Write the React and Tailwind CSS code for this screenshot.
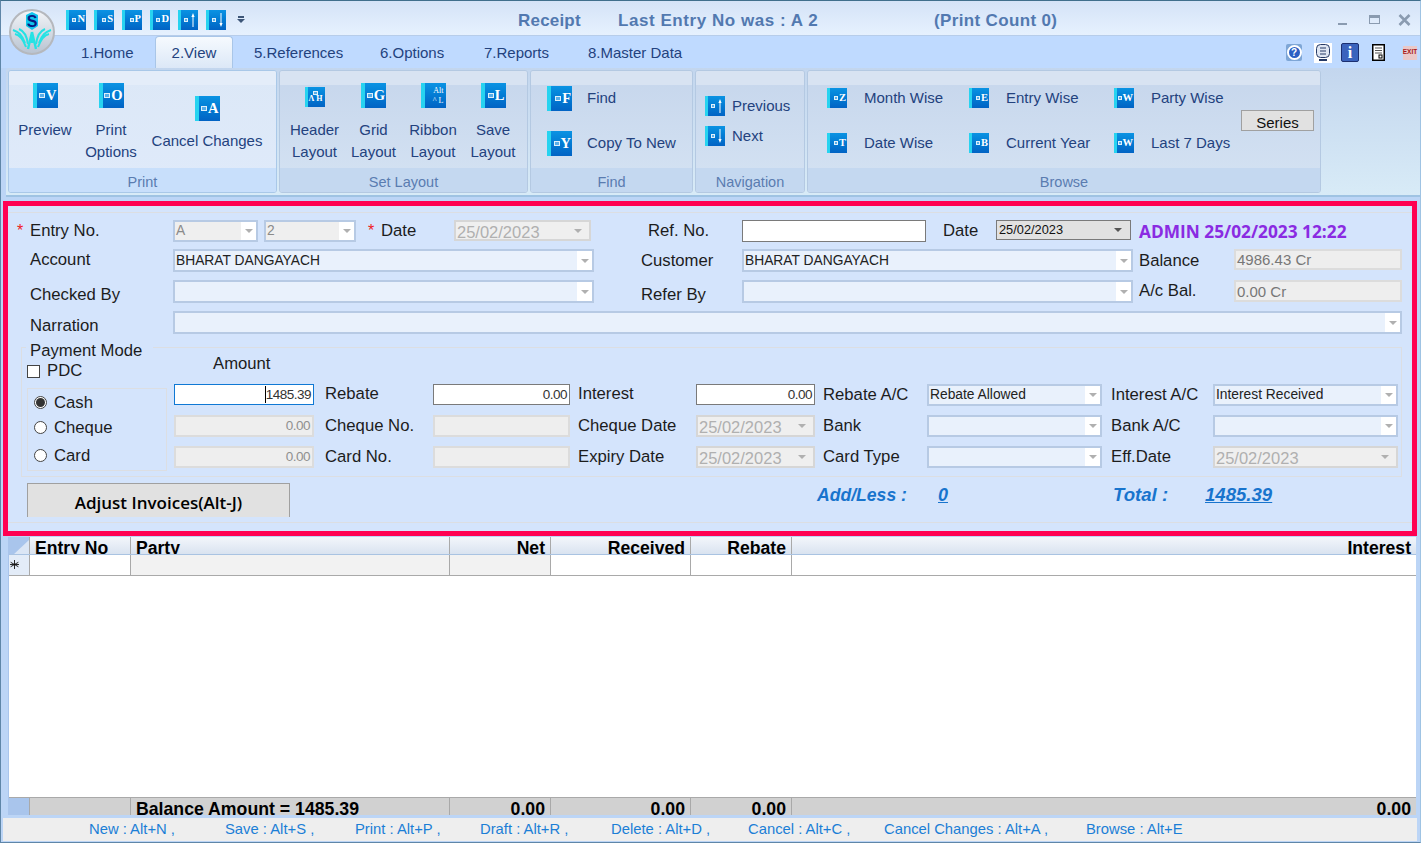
import React from 'react'

// blue "book" shortcut icon used all over the ribbon
function BookIcon({ k, size = 25, arrow, custom, noSquare }) {
  const small = size < 22
  return (
    <div
      className={`flex shrink-0 items-center justify-end overflow-hidden bg-gradient-to-b from-[#0b93e3] to-[#0263c4] ${small ? 'h-[20px] w-[20px] border-l-[3px]' : 'h-[25px] w-[25px] border-l-[4px]'} border-l-[#27d3f0]`}
    >
      {!noSquare && <span className={`block shrink-0 border border-white/80 bg-[#58aee8] ${small ? 'mr-px h-[4px] w-[4px]' : 'mr-px h-[5px] w-[6px]'}`} />}
      {custom}
      {arrow && (
        <svg width="8" height="16" viewBox="0 0 8 16" className="mr-[1px]">
          {arrow === 'up' ? (
            <path d="M4 1 L5.6 5 H4.5 V15 H3.5 V5 H2.4 Z" fill="#fff" />
          ) : (
            <path d="M4 15 L5.6 11 H4.5 V1 H3.5 V11 H2.4 Z" fill="#fff" />
          )}
        </svg>
      )}
      {k && (
        <span className={`pr-px font-['Liberation_Serif',serif] font-bold leading-none text-white ${small ? 'text-[10.5px]' : 'text-[14.5px]'}`}>{k}</span>
      )}
    </div>
  )
}

function RibbonGroup({ title, width, active, children }) {
  return (
    <div
      className={`flex h-[123px] shrink-0 flex-col overflow-hidden rounded-[3px] border ${width} ${active ? 'border-[#a9c8e8] bg-gradient-to-b from-[#dce8f7] to-[#dfeafa]' : 'border-[#b4c9e2] bg-gradient-to-b from-[#c6d6ec] to-[#d5e3f3]'}`}
    >
      <div className={`h-[14px] shrink-0 ${active ? 'bg-[#e4edf9]' : 'bg-[#d8e3f2]'}`} />
      <div className="relative -mt-[2px] flex min-h-0 flex-1">{children}</div>
      <div className={`flex h-[24px] shrink-0 items-center justify-center pt-[5px] text-[14.5px] text-[#5a7cb0] ${active ? 'bg-[#c8dffb]' : 'bg-[#c4d8f0]'}`}>{title}</div>
    </div>
  )
}

function BigButton({ icon, custom, noSquare, small, lines, width, top, gap = 'mt-[11px]' }) {
  return (
    <div className={`flex shrink-0 flex-col items-center ${width} ${top}`}>
      <BookIcon k={icon} custom={custom} noSquare={noSquare} size={small ? 20 : 25} />
      <div className={`flex flex-col items-center whitespace-nowrap text-[15px] leading-[22px] text-[#23427e] ${gap}`}>
        {lines.map((l) => (
          <span key={l}>{l}</span>
        ))}
      </div>
    </div>
  )
}

function SmallButton({ icon, label, gap, arrow, size = 20 }) {
  return (
    <div className="flex items-center whitespace-nowrap text-[15px] leading-[22px] text-[#23427e]">
      <BookIcon k={icon} size={size} arrow={arrow} />
      <span className={gap}>{label}</span>
    </div>
  )
}

function Caret({ color = 'border-t-[#9a9a9a]' }) {
  return <span className={`block h-0 w-0 border-x-[4px] border-t-[4px] border-x-transparent ${color}`} />
}

function Combo({ value, width, height = 'h-[23px]', disabled }) {
  return (
    <div
      className={`flex shrink-0 items-center border-2 border-[#b7cae4] ${width} ${height} ${disabled ? 'bg-[#efefef] text-[#8a8a8a]' : 'bg-[#e9f1fc] text-[#222]'}`}
    >
      <span className="min-w-0 flex-1 truncate pl-[1px] text-[13.8px] leading-none">{value}</span>
      <span className="flex h-full w-[15px] shrink-0 items-center justify-center bg-white">
        <Caret color="border-t-[#b0b0b0]" />
      </span>
    </div>
  )
}

function DateBox({ value, width, height = 'h-[21px]' }) {
  return (
    <div className={`flex shrink-0 items-center border-2 border-[#d6d6d6] bg-[#efefef] pr-[7px] ${width} ${height}`}>
      <span className="min-w-0 flex-1 truncate pl-[1px] pt-[3px] text-[16.5px] leading-none text-[#b0b0b0]">{value}</span>
      <Caret color="border-t-[#b0b0b0]" />
    </div>
  )
}

function Amount({ value, width, height = 'h-[22px]', kind }) {
  const look =
    kind === 'focus'
      ? 'border-[#0f78d4] bg-white text-[#333]'
      : kind === 'white'
        ? 'border-[#7a7a7a] bg-white text-[#333]'
        : 'border-[#dcdcdc] border-2 bg-[#eeeeee] text-[#909090]'
  return (
    <div className={`flex shrink-0 items-center justify-end border pr-[2px] text-[13.5px] leading-none tracking-[-0.5px] ${look} ${width} ${height}`}>
      {kind === 'focus' && <span className="h-[17px] w-px bg-black" />}
      {value}
    </div>
  )
}

function ReadOnly({ value, height }) {
  return (
    <div className={`flex w-[168px] shrink-0 items-center border-2 border-[#dcdcdc] bg-[#eeeeee] pl-[1px] text-[15px] leading-none text-[#777] ${height}`}>{value}</div>
  )
}

function Label({ text, width, className = '' }) {
  return <div className={`flex h-full shrink-0 items-center whitespace-nowrap text-[16.7px] text-[#1c1c1c] ${width} ${className}`}>{text}</div>
}

function Radio({ checked, label, height }) {
  return (
    <div className={`flex items-center ${height}`}>
      <span className="flex h-[13px] w-[13px] items-center justify-center rounded-full border border-[#444] bg-white">
        {checked && <span className="h-[9px] w-[9px] rounded-full bg-[#333]" />}
      </span>
      <span className="ml-[7px] text-[16.7px] text-[#1c1c1c]">{label}</span>
    </div>
  )
}

function Star() {
  return <span className="text-[16px] leading-none text-[#f02020]">*</span>
}

function GridRow({ height, cells, className = '', textClass = '' }) {
  const widths = ['w-[21px]', 'w-[101px]', 'w-[319px]', 'w-[101px]', 'w-[140px]', 'w-[101px]', 'flex-1']
  return (
    <div className={`flex shrink-0 overflow-hidden ${height} ${className}`}>
      {cells.map((c, i) => (
        <div
          key={i}
          className={`shrink-0 overflow-hidden whitespace-nowrap border-r border-[#a9a9a9] px-[5px] last:border-r-0 ${widths[i]} ${c.bg || ''} ${c.right ? 'text-right' : 'text-left'} ${textClass}`}
        >
          {c.text}
        </div>
      ))}
    </div>
  )
}

export default function App() {
  const quick = [{ k: 'N' }, { k: 'S' }, { k: 'P' }, { k: 'D' }, { arrow: 'up' }, { arrow: 'down' }]
  const hints = [
    ['New : Alt+N ,', 'w-[136px]'],
    ['Save : Alt+S ,', 'w-[130px]'],
    ['Print : Alt+P ,', 'w-[125px]'],
    ['Draft : Alt+R ,', 'w-[131px]'],
    ['Delete : Alt+D ,', 'w-[137px]'],
    ['Cancel : Alt+C ,', 'w-[136px]'],
    ['Cancel Changes : Alt+A ,', 'w-[202px]'],
    ['Browse : Alt+E', 'w-[110px]'],
  ]

  return (
    <div className="relative flex h-[843px] w-[1421px] flex-col overflow-hidden border-b border-l border-r border-t border-b-[#5f86a8] border-l-[#5f86a8] border-r-[#9fc3e3] border-t-[#3f6f8c] bg-[#bcd5f6] font-['Liberation_Sans',sans-serif]">
      {/* title bar */}
      <div className="flex h-[35px] shrink-0 items-center border-b border-[#b7cdea] bg-gradient-to-b from-[#d4e3f7] to-[#e6f1fe] pl-[65px] pt-[3px]">
        <div className="flex w-[169px] gap-[8px]">
          {quick.map((q, i) => (
            <BookIcon key={i} k={q.k} arrow={q.arrow} size={20} />
          ))}
        </div>
        <div className="flex w-[12px] flex-col items-center gap-[1px]">
          <span className="h-[2px] w-[6px] bg-[#3d5678]" />
          <Caret color="border-t-[#3d5678]" />
        </div>
        <div className="ml-[271px] w-[100px] pt-[2px] text-[17px] font-bold tracking-[0.2px] text-[#5279b0]">Receipt</div>
        <div className="w-[316px] pt-[2px] text-[17px] font-bold tracking-[0.55px] text-[#5279b0]">Last Entry No was : A 2</div>
        <div className="pt-[2px] text-[17px] font-bold tracking-[0.35px] text-[#5279b0]">(Print Count 0)</div>
        <div className="ml-auto flex items-center pr-[9px]">
          <span className="mt-[8px] h-[2px] w-[9px] bg-[#8a9bb0]" />
          <span className="ml-[22px] h-[9px] w-[11px] border border-t-[3px] border-[#8a9bb0]" />
          <svg width="13" height="12" viewBox="0 0 13 12" className="ml-[18px]">
            <path d="M1.5 1 L11.5 11 M11.5 1 L1.5 11" stroke="#8a9bb0" strokeWidth="2.6" />
          </svg>
        </div>
      </div>

      {/* logo sits over title bar and tabs */}
      <div className="absolute left-[8px] top-[8px] flex h-[46px] w-[46px] items-center justify-center overflow-hidden rounded-full border-2 border-[#b5b8bd] bg-gradient-to-b from-[#f2f4f7] to-[#b9c4d2]">
        <svg width="42" height="42" viewBox="0 0 42 42">
          <path d="M21 1 L27 4 V15 L21 19 L15 15 V4 Z" fill="#10c4ee" />
          <text x="21" y="15.5" textAnchor="middle" fontFamily="Liberation Sans" fontWeight="bold" fontSize="16" fill="#0a1a80">S</text>
          <path d="M2 19 C8 21 11 24 14 32 M4 23 C9 24 12 28 15 36 M8 18 C13 20 16 26 17 33 M40 19 C34 21 31 24 28 32 M38 23 C33 24 30 28 27 36 M34 18 C29 20 26 26 25 33" fill="none" stroke="#25e2e4" strokeWidth="2" />
          <path d="M21 21 L17 38 M21 21 L25 38 M21 21 V32" stroke="#25e2e4" strokeWidth="2.4" />
        </svg>
      </div>

      {/* tabs */}
      <div className="flex h-[32px] shrink-0 items-stretch bg-[#bfdaff] text-[15px] text-[#23427e]">
        <div className="flex w-[154px] items-center pl-[80px] pt-[3px]">1.Home</div>
        <div className="flex w-[78px] items-center justify-center rounded-t-[4px] border border-b-0 border-[#a9c6e8] bg-gradient-to-b from-[#f6fafe] to-[#dce8f7] pt-[2px]">2.View</div>
        <div className="flex w-[147px] items-center pl-[21px] pt-[3px]">5.References</div>
        <div className="flex w-[104px] items-center pt-[3px]">6.Options</div>
        <div className="flex w-[104px] items-center pt-[3px]">7.Reports</div>
        <div className="flex w-[698px] items-center pt-[3px]">8.Master Data</div>
        <div className="flex items-center pt-[1px]">
          <span className="flex h-[17px] w-[16px] items-center justify-center rounded-[2px] bg-[#7ea6d6]">
            <span className="flex h-[15px] w-[15px] items-center justify-center rounded-full border-2 border-white bg-[#2b5fc4] text-[10px] font-bold leading-none text-white">?</span>
          </span>
          <svg width="18" height="20" viewBox="0 0 18 20" className="ml-[12px] bg-white">
            <rect x="2.5" y="1.5" width="13" height="13" rx="4" fill="#dfe6f2" stroke="#263a66" />
            <path d="M6 5 H12 M6 8 H12 M6 11 H12" stroke="#263a66" />
            <path d="M5 17 H13" stroke="#263a66" strokeWidth="2" />
          </svg>
          <span className="ml-[9px] flex h-[19px] w-[18px] items-center justify-center rounded-[2px] border border-[#1c2f70] bg-[#3a63bd] font-['Liberation_Serif',serif] text-[16px] font-bold leading-none text-white">i</span>
          <svg width="15" height="17" viewBox="0 0 15 17" className="ml-[12px]">
            <rect x="1.75" y="0.75" width="11.5" height="15.5" fill="#fff" stroke="#000" strokeWidth="1.5" />
            <path d="M4 4 H11 M4 6.5 H11 M4 9 H11" stroke="#555" />
            <rect x="8" y="11" width="3" height="3" fill="none" stroke="#000" />
          </svg>
          <span className="ml-[17px] flex h-[14px] w-[14px] items-center justify-center bg-[#e9c9c9] text-[6.5px] font-bold leading-none text-[#a81818]">EXIT</span>
        </div>
      </div>

      {/* ribbon */}
      <div className="ml-[5px] flex h-[129px] shrink-0 gap-[2px] rounded-tl-[3px] border-b-2 border-[#9fc3e3] bg-gradient-to-b from-[#c3d6ee] to-[#d8ebf7] pl-[2px] pt-[2px]">
        <RibbonGroup title="Print" width="w-[269px]" active>
          <BigButton icon="V" lines={['Preview']} width="w-[72px]" top="pt-[0px]" />
          <BigButton icon="O" lines={['Print', 'Options']} width="w-[60px]" top="pt-[0px]" />
          <BigButton icon="A" lines={['Cancel Changes']} width="w-[132px]" top="pt-[13px]" gap="mt-[9px]" />
        </RibbonGroup>
        <RibbonGroup title="Set Layout" width="w-[249px]">
          <div className="flex pl-[5px]">
            <BigButton
              small
              noSquare
              custom={
                <span className="flex flex-col items-center pr-[2px] font-['Liberation_Serif',serif] text-[8px] font-bold leading-[8px] text-white">
                  <span className="h-[4px] w-[5px] border border-white/80 bg-[#58aee8]" />
                  <span>Λ H</span>
                </span>
              }
              lines={['Header', 'Layout']}
              width="w-[59px]"
              top="pt-[4px]"
              gap="mt-[12px]"
            />
            <BigButton icon="G" lines={['Grid', 'Layout']} width="w-[59px]" />
            <BigButton
              noSquare
              custom={
                <span className="flex flex-col items-end pr-[2px] font-['Liberation_Serif',serif] text-[8px] leading-[10px] text-white">
                  <span>Alt</span>
                  <span>^ L</span>
                </span>
              }
              lines={['Ribbon', 'Layout']}
              width="w-[60px]"
            />
            <BigButton icon="L" lines={['Save', 'Layout']} width="w-[60px]" />
          </div>
        </RibbonGroup>
        <RibbonGroup title="Find" width="w-[163px]">
          <div className="flex flex-col gap-[20px] pl-[16px] pt-[3px]">
            <SmallButton icon="F" label="Find" gap="ml-[15px] pb-[2px]" size={25} />
            <SmallButton icon="Y" label="Copy To New" gap="ml-[15px] pb-[2px]" size={25} />
          </div>
        </RibbonGroup>
        <RibbonGroup title="Navigation" width="w-[110px]">
          <div className="flex flex-col gap-[8px] pl-[9px] pt-[12px]">
            <SmallButton arrow="up" label="Previous" gap="ml-[7px]" />
            <SmallButton arrow="down" label="Next" gap="ml-[7px]" />
          </div>
        </RibbonGroup>
        <RibbonGroup title="Browse" width="w-[514px]">
          <div className="grid grid-cols-[142px_145px_130px] gap-y-[23px] self-start pl-[19px] pt-[4px]">
            <SmallButton icon="Z" label="Month Wise" gap="ml-[17px]" />
            <SmallButton icon="E" label="Entry Wise" gap="ml-[17px]" />
            <SmallButton icon="W" label="Party Wise" gap="ml-[17px]" />
            <SmallButton icon="T" label="Date Wise" gap="ml-[17px]" />
            <SmallButton icon="B" label="Current Year" gap="ml-[17px]" />
            <SmallButton icon="W" label="Last 7 Days" gap="ml-[17px]" />
          </div>
          <div className="ml-[-3px] mt-[27px] flex h-[21px] w-[73px] items-center justify-center self-start border border-[#a0a0a0] bg-[#e1e1e1] pt-[3px] text-[15px] leading-none text-[#111]">Series</div>
        </RibbonGroup>
      </div>

      {/* form */}
      <div className="ml-[2px] mt-[4px] flex h-[335px] w-[1414px] shrink-0 flex-col border-[5px] border-[#ff0052] bg-[#d4e4fc]">
        <div className="mt-[6px] h-px shrink-0 bg-[#dcdee2]" />
        <div className="ml-[9px] mt-[7px] flex h-[22px] shrink-0">
          <div className="flex w-[13px] items-center"><Star /></div>
          <Label text="Entry No." width="w-[143px]" />
          <Combo value="A" width="w-[85px]" height="h-[22px]" disabled />
          <div className="w-[6px]" />
          <Combo value="2" width="w-[92px]" height="h-[22px]" disabled />
          <div className="ml-[12px] flex w-[13px] items-center"><Star /></div>
          <Label text="Date" width="w-[73px]" />
          <DateBox value="25/02/2023" width="w-[137px]" />
          <Label text="Ref. No." width="w-[94px]" className="ml-[57px]" />
          <div className="h-[22px] w-[184px] shrink-0 border border-[#7a7a7a] bg-white" />
          <Label text="Date" width="w-[53px]" className="ml-[17px]" />
          <div className="flex h-[20px] w-[135px] shrink-0 items-center border border-[#7a7a7a] bg-[#e1e1e1] pr-[8px]">
            <span className="flex-1 pl-[2px] text-[12.8px] leading-none text-[#111]">25/02/2023</span>
            <Caret color="border-t-[#555]" />
          </div>
          <div className="ml-[8px] flex h-full items-center whitespace-nowrap pt-[2px] font-['Open_Sans',sans-serif] text-[17.3px] font-bold text-[#8a2be2]">ADMIN 25/02/2023 12:22</div>
        </div>

        <div className="ml-[22px] mt-[7px] flex h-[23px] shrink-0">
          <Label text="Account" width="w-[143px]" className="pb-[2px]" />
          <Combo value="BHARAT DANGAYACH" width="w-[421px]" />
          <Label text="Customer" width="w-[101px]" className="ml-[47px]" />
          <Combo value="BHARAT DANGAYACH" width="w-[391px]" />
          <Label text="Balance" width="w-[95px]" className="ml-[6px]" />
          <ReadOnly value="4986.43 Cr" height="h-[21px]" />
        </div>

        <div className="ml-[22px] mt-[8px] flex h-[23px] shrink-0">
          <Label text="Checked By" width="w-[143px]" className="pt-[6px]" />
          <Combo width="w-[421px]" />
          <Label text="Refer By" width="w-[101px]" className="ml-[47px] pt-[6px]" />
          <Combo width="w-[391px]" />
          <Label text="A/c Bal." width="w-[95px]" className="ml-[6px] pb-[2px]" />
          <ReadOnly value="0.00 Cr" height="h-[22px]" />
        </div>

        <div className="ml-[22px] mt-[8px] flex h-[23px] shrink-0">
          <Label text="Narration" width="w-[143px]" className="pt-[6px]" />
          <Combo width="w-[1229px]" />
        </div>

        {/* payment group */}
        <div className="ml-[13px] mt-[13px] flex h-[130px] w-[1381px] shrink-0 border border-[#dcdee2] pl-[5px]">
          <div className="flex w-[140px] shrink-0 flex-col">
            <div className="-ml-[1px] -mt-[8px] flex h-[22px] w-[127px] items-center bg-[#d4e4fc] pl-[4px] text-[16.7px] text-[#1c1c1c]">Payment Mode</div>
            <div className="flex h-[18px] items-center">
              <span className="h-[13px] w-[13px] border border-[#444] bg-white" />
              <span className="ml-[7px] text-[16.7px] text-[#1c1c1c]">PDC</span>
            </div>
            <div className="mt-[8px] flex h-[83px] flex-col border border-[#dcdee2] pl-[6px] pt-[1px]">
              <Radio checked label="Cash" height="h-[26px]" />
              <Radio label="Cheque" height="h-[24px]" />
              <Radio label="Card" height="h-[31px] pt-[2px]" />
            </div>
          </div>
          <div className="ml-[7px] flex flex-col">
            <div className="flex h-[32px] items-center pl-[39px] text-[16.7px] text-[#1c1c1c]">Amount</div>
            <div className="mt-[4px] flex h-[21px]">
              <Amount value="1485.39" width="w-[140px]" height="h-[21px]" kind="focus" />
              <Label text="Rebate" width="w-[108px]" className="ml-[11px] pb-[2px]" />
              <Amount value="0.00" width="w-[137px]" height="h-[21px]" kind="white" />
              <Label text="Interest" width="w-[118px]" className="ml-[8px] pb-[2px]" />
              <Amount value="0.00" width="w-[119px]" height="h-[21px]" kind="white" />
              <Label text="Rebate A/C" width="w-[104px]" className="ml-[8px]" />
              <Combo value="Rebate Allowed" width="w-[175px]" height="h-[22px]" />
              <Label text="Interest A/C" width="w-[102px]" className="ml-[9px]" />
              <Combo value="Interest Received" width="w-[185px]" height="h-[22px]" />
            </div>
            <div className="mt-[10px] flex h-[22px]">
              <Amount value="0.00" width="w-[140px]" />
              <Label text="Cheque No." width="w-[108px]" className="ml-[11px]" />
              <Amount width="w-[137px]" />
              <Label text="Cheque Date" width="w-[118px]" className="ml-[8px]" />
              <DateBox value="25/02/2023" width="w-[119px]" height="h-[22px]" />
              <Label text="Bank" width="w-[104px]" className="ml-[8px]" />
              <Combo width="w-[175px]" height="h-[22px]" />
              <Label text="Bank A/C" width="w-[102px]" className="ml-[9px]" />
              <Combo width="w-[185px]" height="h-[22px]" />
            </div>
            <div className="mt-[9px] flex h-[22px]">
              <Amount value="0.00" width="w-[140px]" />
              <Label text="Card No." width="w-[108px]" className="ml-[11px]" />
              <Amount width="w-[137px]" />
              <Label text="Expiry Date" width="w-[118px]" className="ml-[8px]" />
              <DateBox value="25/02/2023" width="w-[119px]" height="h-[22px]" />
              <Label text="Card Type" width="w-[104px]" className="ml-[8px]" />
              <Combo width="w-[175px]" height="h-[22px]" />
              <Label text="Eff.Date" width="w-[102px]" className="ml-[9px]" />
              <DateBox value="25/02/2023" width="w-[185px]" height="h-[22px]" />
            </div>
          </div>
        </div>

        <div className="ml-[19px] mt-[6px] flex h-[34px] shrink-0 items-center">
          <div className="flex h-full w-[263px] items-center justify-center border border-b-0 border-[#a0a0a0] bg-[#e1e1e1] pt-[4px] font-['Open_Sans',sans-serif] text-[17px] font-semibold text-black">Adjust Invoices(Alt-J)</div>
          <div className="ml-[527px] w-[121px] pb-[10px] text-[17.6px] font-bold italic text-[#1874cd]">Add/Less :</div>
          <div className="w-[175px] pb-[10px] text-[18px] font-bold italic text-[#1874cd] underline">0</div>
          <div className="w-[92px] pb-[10px] text-[18.6px] font-bold italic text-[#1874cd]">Total :</div>
          <div className="pb-[10px] text-[18.6px] font-bold italic text-[#1874cd] underline">1485.39</div>
        </div>
        <div className="mt-[5px] h-px shrink-0 bg-[#dcdee2]" />
      </div>

      {/* grid */}
      <div className="ml-[7px] mt-[1px] flex h-[278px] w-[1408px] shrink-0 flex-col overflow-hidden border-l border-[#a9c5ec] bg-white">
        <GridRow
          height="h-[18px]"
          className="border-b border-[#a9c3e2] bg-gradient-to-b from-[#f3f6fb] to-[#d9e3f0]"
          textClass="text-[17.6px] font-bold leading-[22px] text-black"
          cells={[
            {
              text: (
                <svg width="21" height="18" viewBox="0 0 21 18" className="block">
                  <path d="M21 2 V18 H4 Z" fill="#dbe6f5" />
                </svg>
              ),
              bg: 'bg-[#a9c5ec] !px-0',
            },
            { text: 'Entry No' },
            { text: 'Party' },
            { text: 'Net', right: true },
            { text: 'Received', right: true },
            { text: 'Rebate', right: true },
            { text: 'Interest', right: true },
          ]}
        />
        <GridRow
          height="h-[21px]"
          className="border-b border-[#a9a9a9]"
          textClass="text-[14px] leading-[20px]"
          cells={[
            {
              text: (
                <svg width="9" height="9" viewBox="0 0 10 10" className="ml-[1px] mt-[5px] block">
                  <path d="M5 0 V10 M0.7 2.5 L9.3 7.5 M9.3 2.5 L0.7 7.5 M0 5 H10" stroke="#111" strokeWidth="1" />
                </svg>
              ),
              bg: 'bg-[#e3ecf8] !px-0',
            },
            { text: '' },
            { text: '', bg: 'bg-[#f2f2f2]' },
            { text: '', bg: 'bg-[#f2f2f2]' },
            { text: '' },
            { text: '' },
            { text: '' },
          ]}
        />
        <div className="flex-1 bg-white" />
        <GridRow
          height="h-[18px]"
          className="border-t border-[#a9a9a9] bg-[#d1d1d1]"
          textClass="text-[17.7px] font-bold leading-[22px] text-black"
          cells={[
            { text: '', bg: 'bg-[#a9c5ec]' },
            { text: '' },
            { text: 'Balance Amount = 1485.39' },
            { text: '0.00', right: true },
            { text: '0.00', right: true },
            { text: '0.00', right: true },
            { text: '0.00', right: true },
          ]}
        />
      </div>

      {/* shortcut hints */}
      <div className="ml-[2px] mt-[3px] flex h-[23px] w-[1414px] shrink-0 items-center bg-[#eeeeee] pl-[86px] text-[14.8px] text-[#1b7ed6]">
        {hints.map(([text, w]) => (
          <div key={text} className={`shrink-0 whitespace-nowrap ${w}`}>{text}</div>
        ))}
      </div>
    </div>
  )
}
